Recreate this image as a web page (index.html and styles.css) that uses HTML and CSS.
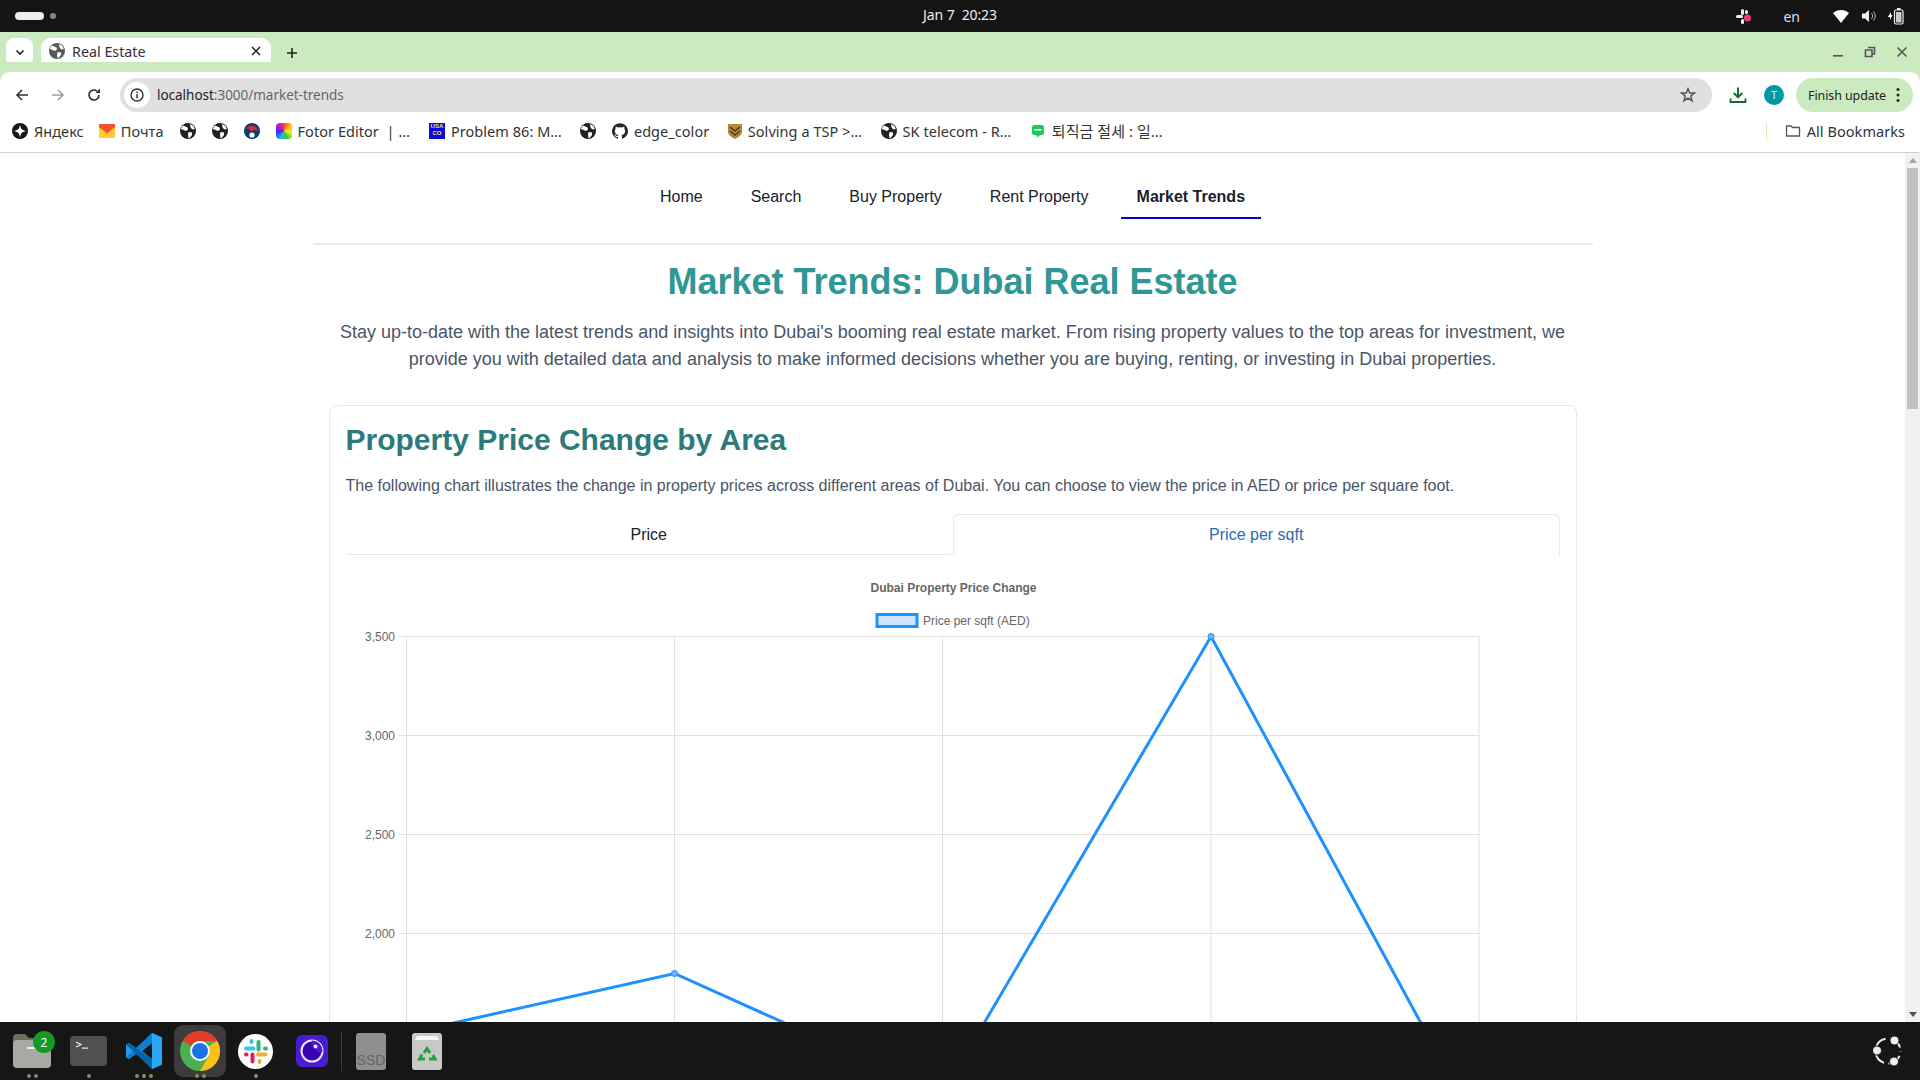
FILE: index.html
```html
<!DOCTYPE html>
<html lang="en">
<head>
<meta charset="utf-8">
<title>Real Estate</title>
<link rel="stylesheet" href="styles.css">
</head>
<body>
<svg class="defs" width="0" height="0" aria-hidden="true">
  <symbol id="globe" viewBox="0 0 16 16">
    <circle cx="8" cy="8" r="8" fill="#202124"/>
    <path d="M3 2.5 C5 3 6 4 7.5 4.5 L8 6.5 L6 8 L3.5 7 L1 6 C1.2 4.6 2 3.4 3 2.5Z M8.5 9 L12 9.5 L12 12 L9.5 15 L8.5 15 L8 12Z M10 1 L13.5 3 L14.8 6 L12.5 6.5 L10.5 4.5Z" fill="#fff"/>
  </symbol>
</svg>

<header class="sysbar">
  <div class="sys-left"><span class="pill"></span><span class="sysdot"></span></div>
  <div class="clock">Jan 7&nbsp; 20:23</div>
  <div class="tray">
    <svg class="tray-slack" width="18" height="18" viewBox="0 0 18 18"><g fill="#eee"><rect x="6" y="2" width="3" height="6" rx="1.5"/><rect x="1" y="8" width="7" height="3" rx="1.5"/><rect x="6" y="12" width="3" height="5" rx="1.5"/><rect x="10" y="3" width="3" height="4" rx="1.5"/></g><circle cx="12.5" cy="11" r="3.6" fill="#ec3a78"/></svg>
    <span class="lang">en</span>
    <svg class="tray-wifi" width="18" height="16" viewBox="0 0 18 16"><path d="M1 5 C5.5 1 12.5 1 17 5 L9 15Z" fill="#fff"/></svg>
    <svg class="tray-vol" width="16" height="16" viewBox="0 0 16 16"><path d="M1 5.5H4L8 2V14L4 10.5H1Z" fill="#eee"/><path d="M10.5 5 C12 6.5 12 9.5 10.5 11 M12.5 3.5 C14.8 6 14.8 10 12.5 12.5" stroke="#bbb" stroke-width="1" fill="none"/></svg>
    <svg class="tray-bat" width="18" height="18" viewBox="0 0 18 18"><path d="M1 9.5L4 5V8H5.5L3 13V10H1Z" fill="#fff"/><rect x="7.5" y="3" width="8.5" height="14" rx="1.5" fill="none" stroke="#eee" stroke-width="1.2"/><rect x="10" y="1" width="3.5" height="2" fill="#eee"/><rect x="9" y="5" width="5.5" height="10.5" fill="#ccc"/></svg>
  </div>
</header>

<div class="tabstrip">
  <button class="tabmenu"><svg width="12" height="12" viewBox="0 0 12 12"><path d="M2.5 4.5L6 8L9.5 4.5" fill="none" stroke="#222" stroke-width="1.6"/></svg></button>
  <div class="tab">
    <svg class="tab-globe" width="16" height="16"><use href="#globe"/></svg>
    <span class="tab-title">Real Estate</span>
    <svg width="10" height="10" viewBox="0 0 10 10"><path d="M1 1L9 9M9 1L1 9" stroke="#222" stroke-width="1.5"/></svg>
  </div>
  <svg class="newtab" width="12" height="12" viewBox="0 0 12 12"><path d="M6 1V11M1 6H11" stroke="#222" stroke-width="1.6"/></svg>
  <div class="winctl">
    <svg width="12" height="12" viewBox="0 0 12 12"><rect x="1" y="9" width="10" height="1.6" fill="#555"/></svg>
    <svg width="12" height="12" viewBox="0 0 12 12"><path d="M4 1.5H10.5V8H8.5M1.5 4H8V10.5H1.5Z" fill="none" stroke="#555" stroke-width="1.6"/></svg>
    <svg width="12" height="12" viewBox="0 0 12 12"><path d="M1.5 1.5L10.5 10.5M10.5 1.5L1.5 10.5" stroke="#555" stroke-width="1.6"/></svg>
  </div>
</div>

<div class="toolbar">
  <svg class="navbtn" width="16" height="16" viewBox="0 0 16 16"><path d="M14 8H3M8 3L3 8L8 13" fill="none" stroke="#333" stroke-width="1.6"/></svg>
  <svg class="navbtn" width="16" height="16" viewBox="0 0 16 16"><path d="M2 8H13M8 3L13 8L8 13" fill="none" stroke="#a0a0a0" stroke-width="1.6"/></svg>
  <svg class="navbtn" width="16" height="16" viewBox="0 0 16 16"><path d="M13 8A5 5 0 1 1 11 4" fill="none" stroke="#333" stroke-width="1.7"/><path d="M9.5 6H14V1.5Z" fill="#333"/></svg>
  <div class="omnibox">
    <span class="infobtn"><svg width="14" height="14" viewBox="0 0 14 14"><circle cx="7" cy="7" r="6" fill="none" stroke="#333" stroke-width="1.4"/><rect x="6.3" y="6" width="1.5" height="4.4" fill="#333"/><rect x="6.3" y="3.6" width="1.5" height="1.5" fill="#333"/></svg></span>
    <span class="url"><span class="url-host">localhost</span>:3000/market-trends</span>
    <svg class="star" width="16" height="16" viewBox="0 0 16 16"><path d="M8 1.8L9.8 6H14.4L10.8 9L12 13.8L8 11.2L4 13.8L5.2 9L1.6 6H6.2Z" fill="none" stroke="#555" stroke-width="1.5"/></svg>
  </div>
  <svg class="dl" width="18" height="18" viewBox="0 0 18 18"><path d="M9 1.5V11M4.8 7L9 11.4L13.2 7" fill="none" stroke="#146c2e" stroke-width="2"/><path d="M1.5 12.5V16H16.5V12.5" fill="none" stroke="#146c2e" stroke-width="1.8"/></svg>
  <span class="avatar">T</span>
  <div class="update"><span>Finish update</span><svg width="4" height="16" viewBox="0 0 4 16"><circle cx="2" cy="2.5" r="1.5" fill="#222"/><circle cx="2" cy="8" r="1.5" fill="#222"/><circle cx="2" cy="13.5" r="1.5" fill="#222"/></svg></div>
</div>

<nav class="bookmarks">
  <a class="bm bm-ya"><svg width="16" height="16" viewBox="0 0 16 16"><circle cx="8" cy="8" r="8" fill="#17181a"/><path d="M8 1.5C8.6 6 10 7.4 14.5 8C10 8.6 8.6 10 8 14.5C7.4 10 6 8.6 1.5 8C6 7.4 7.4 6 8 1.5Z" fill="#fff"/></svg>Яндекс</a>
  <a class="bm bm-po"><svg width="16" height="14" viewBox="0 0 16 14"><rect width="16" height="14" fill="#ffcc33"/><path d="M0 0H16V3L8 9.5L0 3Z" fill="#f4512c"/></svg>Почта</a>
  <a class="bm"><svg width="16" height="16"><use href="#globe"/></svg></a>
  <a class="bm"><svg width="16" height="16"><use href="#globe"/></svg></a>
  <a class="bm"><svg width="16" height="16" viewBox="0 0 16 16"><circle cx="8" cy="8" r="8" fill="#0e3d70"/><path d="M2 5.5A6.5 6 0 0 1 14 8.5C13 6.5 10.5 6 9 7.5C7.5 9 5 7.5 5.5 5.5Z" fill="#d92b30"/><circle cx="8" cy="12" r="2.6" fill="#fff"/></svg></a>
  <a class="bm bm-fo"><span class="fotor"></span>Fotor Editor&nbsp; | …</a>
  <a class="bm bm-us"><span class="usaco">USA<br>CO</span>Problem 86: M…</a>
  <a class="bm bm-g2"><svg width="16" height="16"><use href="#globe"/></svg></a>
  <a class="bm bm-gh"><svg width="16" height="16" viewBox="0 0 16 16"><path d="M8 .2A8 8 0 0 0 5.5 15.8C5.9 15.9 6 15.6 6 15.4V14C3.8 14.5 3.3 13 3.3 13C3 12.1 2.400 11.800 2.400 11.800C1.700 11.300 2.500 11.300 2.500 11.300C3.300 11.400 3.700 12.100 3.700 12.100C4.400 13.400 5.600 13 6 12.800C6.100 12.300 6.300 12 6.500 11.800C4.700 11.600 2.900 10.900 2.900 7.900C2.900 7 3.200 6.300 3.700 5.800C3.600 5.600 3.300 4.800 3.800 3.700C3.800 3.700 4.500 3.500 6 4.500A7.500 7.500 0 0 1 10 4.500C11.500 3.500 12.200 3.700 12.200 3.700C12.700 4.800 12.400 5.600 12.300 5.800C12.800 6.300 13.100 7 13.100 7.900C13.100 10.900 11.300 11.600 9.500 11.800C9.800 12.100 10 12.500 10 13.200V15.400C10 15.600 10.100 15.900 10.500 15.800A8 8 0 0 0 8 .2Z" fill="#24292f"/></svg>edge_color</a>
  <a class="bm bm-ts"><svg width="14" height="16" viewBox="0 0 14 16"><path d="M0 1H14V9C14 12 10 14.500 7 16C4 14.500 0 12 0 9Z" fill="#b5893a"/><path d="M2 4L7 8L12 4M2 8L7 12L12 8" stroke="#4a3a20" stroke-width="1.500" fill="none"/></svg>Solving a TSP &gt;…</a>
  <a class="bm bm-sk"><svg width="16" height="16"><use href="#globe"/></svg>SK telecom - R…</a>
  <a class="bm bm-kr"><svg width="14" height="16" viewBox="0 0 14 16"><rect x="1" y="2" width="12" height="10" rx="2.500" fill="#1ec95a"/><path d="M5 12H9L7 14.500Z" fill="#1ec95a"/><rect x="3.500" y="6" width="7" height="1.500" fill="#fff"/></svg><span class="cjk">퇴직금 절세 : 일…</span></a>
  <span class="bm-spacer"></span>
  <span class="bm-sep"></span>
  <a class="bm bm-all"><svg width="16" height="16" viewBox="0 0 16 16"><path d="M1.500 3H6L7.500 4.500H14.500V13H1.500Z" fill="none" stroke="#555" stroke-width="1.300"/></svg>All Bookmarks</a>
</nav>

<div class="viewport">
  <main class="page">
    <div class="container">
      <ul class="sitenav">
        <li class="navitem">Home</li>
        <li class="navitem">Search</li>
        <li class="navitem">Buy Property</li>
        <li class="navitem">Rent Property</li>
        <li class="navitem navitem-on">Market Trends</li>
      </ul>
      <h1 class="title">Market Trends: Dubai Real Estate</h1>
      <p class="lead">Stay up-to-date with the latest trends and insights into Dubai's booming real estate market. From rising property values to the top areas for investment, we provide you with detailed data and analysis to make informed decisions whether you are buying, renting, or investing in Dubai properties.</p>
      <section class="card">
        <h2 class="card-title">Property Price Change by Area</h2>
        <p class="card-text">The following chart illustrates the change in property prices across different areas of Dubai. You can choose to view the price in AED or price per square foot.</p>
        <div class="tabs">
          <div class="ctab">Price</div>
          <div class="ctab ctab-on">Price per sqft</div>
        </div>
        <svg class="chart" width="1215" height="620" viewBox="0 0 1215 620">
          <text class="c-title" x="607.500" y="37" text-anchor="middle">Dubai Property Price Change</text>
          <rect class="c-swatch" x="531" y="59.500" width="40" height="12"/>
          <text class="c-label" x="577" y="70">Price per sqft (AED)</text>
          <g class="c-grid">
            <path d="M52.500 81.500H1133M52.500 180.500H1133M52.500 279.500H1133M52.500 378.500H1133M52.500 477.500H1133"/>
            <path d="M60.500 81V620M328.500 81V620M596.500 81V620M865 81V620M1133 81V620"/>
          </g>
          <g class="c-tick">
            <text x="49" y="85.500" text-anchor="end">3,500</text>
            <text x="49" y="184.500" text-anchor="end">3,000</text>
            <text x="49" y="283.500" text-anchor="end">2,500</text>
            <text x="49" y="382.500" text-anchor="end">2,000</text>
          </g>
          <path class="c-line" d="M60.500 478.500L328.500 418.500L596.500 539L865 81.500L1133 575"/>
          <circle class="c-pt" cx="328.500" cy="418.500" r="3"/>
          <circle class="c-pt" cx="865" cy="81.500" r="3"/>
        </svg>
      </section>
    </div>
  </main>
  <div class="scrollbar">
    <span class="sb-up"></span>
    <span class="sb-thumb"></span>
    <span class="sb-fill"></span>
    <span class="sb-down"></span>
  </div>
</div>

<footer class="dock">
  <div class="app app-files">
    <svg width="38" height="36" viewBox="0 0 38 36"><path d="M0 5Q0 1 4 1H12L16 5H24V12H0Z" fill="#6f6e56"/><rect y="7" width="38" height="28" rx="4" fill="#a9a9a4"/><rect x="14" y="14" width="10" height="2" fill="#eee"/></svg>
    <span class="badge">2</span>
    <span class="dots"><i></i><i></i></span>
  </div>
  <div class="app app-term">
    <svg width="37" height="31" viewBox="0 0 37 31"><rect width="37" height="30" rx="4" fill="#505050"/><path d="M6 6L11 8.500L6 11" fill="none" stroke="#eee" stroke-width="1.200"/><rect x="12" y="11.500" width="6" height="1.200" fill="#eee"/></svg>
    <span class="dots"><i></i></span>
  </div>
  <div class="app app-code">
    <svg width="36" height="36" viewBox="0 0 36 36"><path d="M26 0L36 4.500V31.500L26 36L10 20.500L3 26L0 24.500V11.500L3 10L10 15.500ZM26 10L16 18L26 26Z" fill="#1f9cf0"/><path d="M0 24.500L26 0V10L3 26Z" fill="#0c7fd0"/><path d="M0 11.500L26 36L36 31.500L26 26L3 10Z" fill="#0065a9"/><path d="M26 0L36 4.500V31.500L26 36Z" fill="#29a9f4"/></svg>
    <span class="dots"><i></i><i></i><i></i></span>
  </div>
  <div class="app app-chrome">
    <svg width="40" height="40" viewBox="0 0 40 40"><circle cx="20" cy="20" r="20" fill="#4caf50"/><path d="M20 0A20 20 0 0 1 37.300 10H20A10 10 0 0 0 11.300 15L2.700 10A20 20 0 0 1 20 0Z" fill="#e33b2e"/><path d="M37.300 10A20 20 0 0 1 20 40L28.700 25A10 10 0 0 0 28.700 15Z" fill="#fbc116"/><circle cx="20" cy="20" r="10" fill="#fff"/><circle cx="20" cy="20" r="8" fill="#1a73e8"/></svg>
    <span class="dots"><i></i><i></i></span>
  </div>
  <div class="app app-slack">
    <svg width="35" height="35" viewBox="0 0 35 35"><circle cx="17.500" cy="17.500" r="17.500" fill="#fff"/><g fill="none" stroke-width="4" stroke-linecap="round"><path d="M8 14.500H15.500M13.500 7V8" stroke="#36c5f0"/><path d="M20.500 8V15.500M27 14.500H28" stroke="#2eb67d"/><path d="M20 20.500H27.500M21.500 28V27" stroke="#ecb22e"/><path d="M14.500 20.500V27.500M8 20.500H8.500" stroke="#e01e5a"/></g></svg>
    <span class="dots"><i></i></span>
  </div>
  <div class="app app-cam">
    <svg width="32" height="32" viewBox="0 0 32 32"><rect width="32" height="32" rx="6" fill="#4a1bd0"/><circle cx="16" cy="16" r="10.500" fill="#3a00b0" stroke="#efeaff" stroke-width="2"/><path d="M16 5.500A10.500 10.500 0 0 1 26.500 16C26.500 18 24 19 22 17C20 15 17 12 15 9Z" fill="#4a1bd0"/><circle cx="19.500" cy="11.500" r="2" fill="#efeaff"/></svg>
  </div>
  <span class="dock-sep"></span>
  <div class="app app-ssd"><svg width="30" height="37" viewBox="0 0 30 37"><rect width="30" height="37" rx="3" fill="#8f8f8f"/><text class="ssd" x="15" y="32" text-anchor="middle">SSD</text></svg></div>
  <div class="app app-trash"><svg width="30" height="37" viewBox="0 0 30 37"><rect width="30" height="37" rx="3" fill="#c9c9c9"/><path d="M5 3H25L27 7H3Z" fill="#f7f7f7"/><g fill="none" stroke="#2f9e3f" stroke-width="3"><path d="M12 20L15 15.500L18 20"/><path d="M21 22L23 26H17"/><path d="M13 26H7.500L10 21.500"/></g></svg></div>
  <svg class="ulogo" width="30" height="30" viewBox="0 0 30 30"><g fill="none" stroke="#eee" stroke-width="2"><circle cx="15" cy="15" r="12.500" stroke-dasharray="14 4.500" stroke-dashoffset="-5"/></g><g fill="#eee" stroke="#161616" stroke-width="1"><circle cx="21.500" cy="4.500" r="4.500"/><circle cx="4" cy="14.500" r="4.500"/><circle cx="21" cy="25.500" r="4.500"/></g></svg>
</footer>
</body>
</html>
```
FILE: styles.css
```css
* { box-sizing: border-box; }
html, body { margin: 0; height: 100%; }
body {
  display: flex;
  flex-direction: column;
  height: 1080px;
  overflow: hidden;
  background: #fff;
  font-family: "Noto Sans", "Noto Sans CJK KR", sans-serif;
  color: #222;
}
.defs { position: absolute; }

.sysbar {
  flex: none;
  height: 32px;
  background: #141414;
  color: #eee;
  display: grid;
  grid-template-columns: 1fr auto 1fr;
  align-items: center;
  font-size: 14px;
}
.sys-left { display: flex; align-items: center; padding-left: 15px; gap: 6px; }
.pill { width: 29px; height: 8px; border-radius: 4px; background: #eee; }
.sysdot { width: 6px; height: 6px; border-radius: 50%; background: #888; }
.clock { letter-spacing: -0.1px; padding-bottom: 3px; }
.tray { display: flex; align-items: center; justify-content: flex-end; padding-right: 15px; }
.tray-slack { margin-right: 30px; }
.lang { font-size: 14px; color: #cfe2ff; margin-right: 32px; }
.tray-wifi { margin-right: 11px; }
.tray-vol { margin-right: 10px; }

.tabstrip {
  flex: none;
  height: 40px;
  background: #cceac0;
  display: flex;
  align-items: flex-start;
  padding: 6px 12px 0 6px;
}
.tabmenu {
  width: 27px;
  height: 28px;
  border: 0;
  padding: 0;
  border-radius: 8px;
  background: #fff;
  display: flex;
  align-items: center;
  justify-content: center;
}
.tab {
  position: relative;
  width: 230px;
  height: 34px;
  margin-left: 8px;
  padding: 0 10px 8px 8px;
  background: #fff;
  border-radius: 10px 10px 0 0;
  display: flex;
  align-items: center;
  font-size: 14.3px;
}
.tab::before, .tab::after {
  content: "";
  position: absolute;
  bottom: 0;
  width: 8px;
  height: 8px;
}
.tab::before { left: -8px; background: radial-gradient(circle at 0 0, #cceac0 8px, #fff 8.5px); }
.tab::after { right: -8px; background: radial-gradient(circle at 100% 0, #cceac0 8px, #fff 8.5px); }
.tab-globe { margin-right: 7px; opacity: .75; }
.tab-title { flex: 1; color: #333; }
.newtab { margin: 9px 0 0 15px; }
.winctl { margin-left: auto; display: flex; gap: 20px; padding-top: 8px; }

.toolbar {
  flex: none;
  height: 40px;
  background: #fff;
  border-radius: 10px 10px 0 0;
  margin-top: 0;
  display: flex;
  align-items: center;
  padding: 6px 7px 0 14px;
  position: relative;
  box-shadow: 0 -10px 0 #cceac0;
}
.navbtn { margin-right: 20px; flex: none; }
.omnibox {
  flex: none;
  width: 1592px;
  height: 34px;
  margin-left: -2px;
  border-radius: 17px;
  background: #e0e0e0;
  display: flex;
  align-items: center;
  padding: 0 16px 0 4px;
}
.infobtn {
  width: 26px;
  height: 26px;
  border-radius: 50%;
  background: #fff;
  display: flex;
  align-items: center;
  justify-content: center;
  margin-right: 7px;
}
.url { flex: 1; font-size: 13.5px; letter-spacing: -0.02px; color: #666; }
.url-host { color: #222; }
.dl { margin-left: 17px; flex: none; }
.avatar {
  flex: none;
  width: 20px;
  height: 20px;
  margin-left: 17px;
  border-radius: 50%;
  background: #0097a7;
  color: #dff;
  font-size: 10px;
  display: flex;
  align-items: center;
  justify-content: center;
}
.update {
  flex: none;
  width: 117px;
  height: 34px;
  margin-left: 12px;
  border-radius: 17px;
  background: #cceac0;
  font-size: 12.5px;
  letter-spacing: -0.1px;
  display: flex;
  align-items: center;
  justify-content: space-between;
  padding: 0 13px 0 12px;
}

.bookmarks {
  flex: none;
  height: 41px;
  border-bottom: 1px solid #d0d0d0;
  display: flex;
  align-items: center;
  padding: 0 15px 3px 12px;
  font-size: 14.5px;
  letter-spacing: 0.05px;
  color: #333;
  gap: 16px;
}
.bm { display: flex; align-items: center; gap: 6px; white-space: nowrap; flex: none; }
.bm-po { margin-left: -1px; }
.bm-us { margin-left: 3px; }
.bm-g2 { margin-left: 2px; }
.bm-ts, .bm-sk { margin-left: 2.5px; }
.bm-kr { gap: 7px; margin-left: 3.5px; }
.cjk { font-size: 15px; }
.fotor {
  width: 16px;
  height: 16px;
  border-radius: 4px;
  background: conic-gradient(#f44, #fb0, #ee3, #3c3, #2bd, #33e, #b1d, #f44);
}
.usaco {
  width: 16px;
  height: 16px;
  background: #0a0ae0;
  color: #ee3;
  font: bold 6px/7px "Liberation Sans", sans-serif;
  letter-spacing: 0;
  text-align: center;
  overflow: hidden;
}
.bm-spacer { flex: 1; }
.bm-sep { width: 1px; height: 16px; background: #cceac0; margin-right: 1.5px; }

.viewport { flex: 1; min-height: 0; display: flex; overflow: hidden; }
.page { flex: 1; min-width: 0; overflow: hidden; background: #fff; }
.container { width: 1280px; margin: 0 auto; font-family: "Liberation Sans", Arial, sans-serif; }
.sitenav {
  list-style: none;
  margin: 0;
  padding: 24px 0 24px;
  display: flex;
  justify-content: center;
  gap: 16px;
  border-bottom: 2px solid #e9ebef;
}
.navitem {
  font-size: 16px;
  line-height: 24px;
  padding: 8px 16px;
  color: #1a202c;
  border-bottom: 2px solid transparent;
}
.navitem-on { font-weight: 700; border-bottom-color: #0000e6; }
.title {
  margin: 15px 0 16px;
  text-align: center;
  font-size: 36px;
  line-height: 43px;
  font-weight: 700;
  color: #319795;
}
.lead {
  margin: 0 0 32px;
  padding: 0 16px;
  text-align: center;
  font-size: 18px;
  line-height: 27px;
  color: #4a5568;
}
.card {
  margin: 0 16px;
  padding: 16px;
  border: 1px solid #e2e8f0;
  border-radius: 8px;
}
.card-title { margin: 0 0 16px; font-size: 30px; line-height: 36px; font-weight: 700; color: #2c7a7b; }
.card-text { margin: 0 0 16px; font-size: 16px; line-height: 24px; color: #4a5568; }
.tabs { display: flex; }
.ctab {
  flex: 1;
  height: 41px;
  text-align: center;
  font-size: 16px;
  line-height: 39px;
  color: #1a202c;
  border: 1px solid transparent;
  border-bottom-color: #e2e8f0;
}
.ctab-on {
  margin-left: 1px;
  color: #2b6cb0;
  border-color: #e2e8f0;
  border-bottom: 0;
  border-radius: 6px 6px 0 0;
}
.chart { display: block; }
.c-title { font-size: 12px; font-weight: 700; fill: #666; }
.c-label, .c-tick text { font-size: 12px; fill: #666; }
.c-swatch { fill: #cfe5ff; stroke: #1e90ff; stroke-width: 3; }
.c-grid path { fill: none; stroke: #e1e1e1; stroke-width: 1; }
.c-line { fill: none; stroke: #1e90ff; stroke-width: 3; }
.c-pt { fill: #6db6ff; stroke: #1e90ff; stroke-width: 1; }

.scrollbar {
  flex: none;
  width: 15px;
  background: #f1f1f1;
  display: flex;
  flex-direction: column;
  align-items: center;
}
.sb-up, .sb-down { flex: none; width: 0; height: 0; border-left: 4px solid transparent; border-right: 4px solid transparent; }
.sb-up { margin-top: 5px; border-bottom: 5px solid #a3a3a3; }
.sb-down { margin-bottom: 5px; border-top: 5px solid #505050; }
.sb-thumb { flex: none; width: 11px; height: 241px; margin-top: 5px; background: #c1c1c1; }
.sb-fill { flex: 1; }

.dock {
  flex: none;
  height: 58px;
  background: #161616;
  display: flex;
  align-items: center;
  position: relative;
  padding-left: 13px;
}
.app { flex: none; position: relative; display: flex; align-items: center; justify-content: center; height: 52px; }
.dots { position: absolute; left: 0; right: 0; bottom: -1px; display: flex; justify-content: center; gap: 3px; }
.dots i { width: 4px; height: 4px; border-radius: 50%; background: #8d8a62; }
.app-files { width: 38px; }
.badge {
  position: absolute;
  left: 20px;
  top: 6px;
  width: 22px;
  height: 22px;
  border-radius: 50%;
  background: #149a24;
  color: #fff;
  font-size: 12px;
  display: flex;
  align-items: center;
  justify-content: center;
}
.app-term { width: 37px; margin-left: 19px; }
.app-code { width: 36px; margin-left: 19px; }
.app-chrome { width: 52px; margin-left: 12px; background: #3c3c3c; border-radius: 9px; }
.app-slack { width: 35px; margin-left: 12px; }
.app-cam { width: 32px; margin-left: 23px; }
.dock-sep { flex: none; width: 1px; height: 40px; background: #3d3d3d; margin: 0 14px 0 13px; }
.app-ssd { width: 30px; }
.app-trash { width: 30px; margin-left: 26px; }
.ssd { font: 14px "Liberation Sans", sans-serif; fill: #666; }
.ulogo { margin-left: auto; margin-right: 17px; flex: none; }
```
